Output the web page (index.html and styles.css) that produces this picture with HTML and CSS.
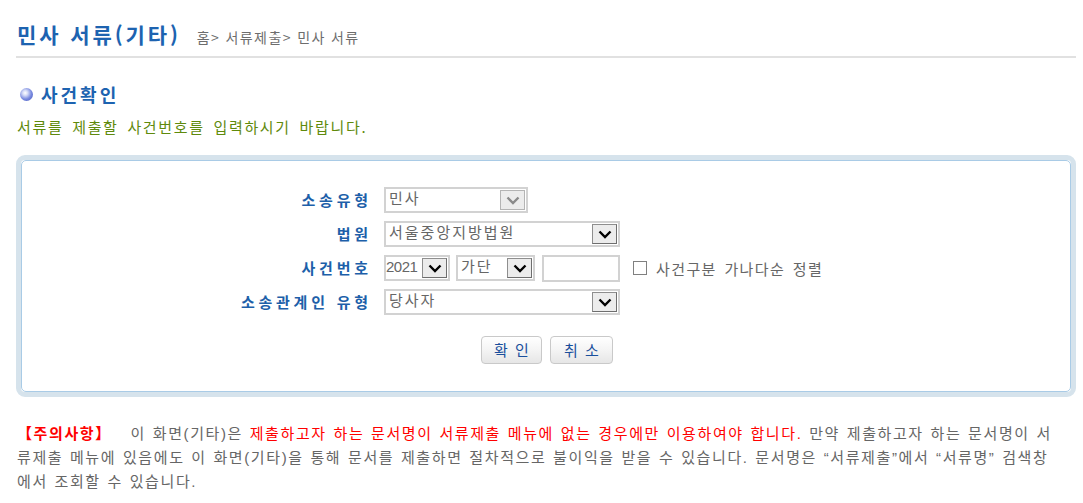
FILE: index.html
```html
<!DOCTYPE html>
<html lang="ko">
<head>
<meta charset="utf-8">
<title>민사 서류(기타)</title>
<link rel="stylesheet" href="styles.css">
</head>
<body>
<div class="page">
  <div class="head">
    <h1 class="title">민사 서류(기타)</h1>
    <div class="crumb">홈&gt; 서류제출&gt; 민사 서류</div>
  </div>

  <h2 class="sec"><span class="bullet"></span>사건확인</h2>
  <p class="guide">서류를 제출할 사건번호를 입력하시기 바랍니다.</p>

  <div class="box">
    <div class="box-in">
      <div class="form">
        <div class="lbl">소송유형</div>
        <div class="fld">
          <div class="sel sel-dis w1">
            <span class="val">민사</span>
            <span class="arr"><svg width="14" height="9" viewBox="0 0 14 9"><path d="M1.5 1.5 L7 7 L12.5 1.5" fill="none" stroke="#8a8a8a" stroke-width="2.4"/></svg></span>
          </div>
        </div>

        <div class="lbl">법원</div>
        <div class="fld">
          <div class="sel w2">
            <span class="val">서울중앙지방법원</span>
            <span class="arr"><svg width="14" height="9" viewBox="0 0 14 9"><path d="M1.5 1.5 L7 7 L12.5 1.5" fill="none" stroke="#000" stroke-width="2.4"/></svg></span>
          </div>
        </div>

        <div class="lbl">사건번호</div>
        <div class="fld row3">
          <div class="sel w3">
            <span class="val num">2021</span>
            <span class="arr"><svg width="14" height="9" viewBox="0 0 14 9"><path d="M1.5 1.5 L7 7 L12.5 1.5" fill="none" stroke="#000" stroke-width="2.4"/></svg></span>
          </div>
          <div class="sel w4">
            <span class="val">가단</span>
            <span class="arr"><svg width="14" height="9" viewBox="0 0 14 9"><path d="M1.5 1.5 L7 7 L12.5 1.5" fill="none" stroke="#000" stroke-width="2.4"/></svg></span>
          </div>
          <div class="txt"></div>
          <label class="chk"><span class="box-c"></span>사건구분 가나다순 정렬</label>
        </div>

        <div class="lbl">소송관계인 유형</div>
        <div class="fld">
          <div class="sel w2">
            <span class="val">당사자</span>
            <span class="arr"><svg width="14" height="9" viewBox="0 0 14 9"><path d="M1.5 1.5 L7 7 L12.5 1.5" fill="none" stroke="#000" stroke-width="2.4"/></svg></span>
          </div>
        </div>
      </div>

      <div class="btns">
        <button class="btn">확 인</button>
        <button class="btn">취 소</button>
      </div>
    </div>
  </div>

  <p class="notice"><b class="red">【주의사항】</b> 이 화면(기타)은 <span class="red">제출하고자 하는 문서명이 서류제출 메뉴에 없는 경우에만 이용하여야 합니다.</span> 만약 제출하고자 하는 문서명이 서류제출 메뉴에 있음에도 이 화면(기타)을 통해 문서를 제출하면 절차적으로 불이익을 받을 수 있습니다. 문서명은 “서류제출”에서 “서류명” 검색창에서 조회할 수 있습니다.</p>
</div>
</body>
</html>
```

FILE: styles.css
```css
* { box-sizing: border-box; }
body {
  margin: 0;
  background: #fff;
  font-family: "Noto Sans CJK KR", "Noto Sans", sans-serif;
  color: #666;
}
.page {
  padding: 0 7px 0 16px;
}
.head {
  height: 58px;
  display: flex;
  align-items: baseline;
  gap: 16px;
  padding-top: 19px;
  padding-left: 1px;
  border-bottom: 2px solid #e1e1e1;
}
.title {
  margin: 0;
  font-size: 21px;
  line-height: 30px;
  font-weight: bold;
  letter-spacing: 2.9px;
  color: #1d63b0;
}
.crumb {
  font-size: 14px;
  color: #6d6d6d;
  letter-spacing: 1.4px;
}
.sec {
  margin: 24px 0 0 4px;
  display: flex;
  align-items: center;
  gap: 8px;
  font-size: 18px;
  line-height: 24px;
  font-weight: bold;
  letter-spacing: 3px;
  color: #1d63b0;
}
.bullet {
  width: 13px;
  height: 13px;
  border-radius: 50%;
  background: radial-gradient(circle at 40% 38%, #ffffff 0, #d6dcf7 22%, #7a8be0 55%, #3d4fb8 100%);
}
.guide {
  margin: 11px 0 0 1px;
  font-size: 15px;
  line-height: 20px;
  color: #5f8a0c;
  letter-spacing: 1.65px;
  word-spacing: 3px;
}
.box {
  margin-top: 18px;
  border: 5px solid #d6e3ec;
  border-radius: 9px;
}
.box-in {
  border: 1px solid #a9cbe6;
  border-radius: 5px;
  padding: 26px 0 27px;
}
.form {
  display: grid;
  grid-template-columns: 346px 1fr;
  column-gap: 16px;
  row-gap: 8px;
  grid-auto-rows: 26px;
}
.lbl {
  text-align: right;
  font-size: 15px;
  line-height: 26px;
  font-weight: bold;
  color: #1d5fa9;
  letter-spacing: 3.75px;
  margin-right: -3.75px;
}
.fld {
  display: flex;
  align-items: center;
}
.row3 .w3 { margin-right: 6px; }
.row3 .w4 { margin-right: 7px; }
.sel {
  height: 26px;
  border: 2px solid #d2d2d2;
  display: flex;
  align-items: stretch;
  justify-content: space-between;
  background: #fff;
}
.w1 { width: 144px; }
.w2 { width: 236px; }
.w3 { width: 66px; }
.w4 { width: 79px; }
.val {
  font-size: 15px;
  line-height: 18px;
  color: #666;
  padding-left: 3px;
  letter-spacing: 2px;
}
.val.num {
  font-family: "Liberation Sans", sans-serif;
  font-size: 15px;
  padding-left: 0;
  letter-spacing: -0.5px;
  line-height: 20px;
}
.arr {
  width: 25px;
  margin: 1px 1px 1px 0;
  border: 1px solid #8e8e8e;
  border-right-color: #6e6e6e;
  border-bottom-color: #6e6e6e;
  background: #ececec;
  display: flex;
  align-items: center;
  justify-content: center;
}
.sel-dis .arr {
  border-color: #b4b4b4;
  background: #ececec;
}
.txt {
  width: 78px;
  height: 27px;
  border: 2px solid #d2d2d2;
  margin-right: 13px;
}
.chk {
  display: flex;
  align-items: center;
  gap: 9px;
  font-size: 15px;
  color: #666;
  letter-spacing: 1.4px;
  word-spacing: 2px;
}
.box-c {
  width: 14px;
  height: 14px;
  border: 1px solid #808080;
  background: #fff;
}
.btns {
  display: flex;
  gap: 8px;
  padding-left: 459px;
  margin-top: 21px;
}
.btn {
  width: 61px;
  height: 28px;
  border: 1px solid #c9c9c9;
  border-radius: 4px;
  background: linear-gradient(#ffffff, #f4f4f4 50%, #e6e6e6);
  font-family: "Noto Sans CJK KR", sans-serif;
  font-size: 15px;
  line-height: 24px;
  color: #1a4f9c;
  padding: 0;
  word-spacing: 3px;
}
.btn + .btn { width: 63px; }
.notice {
  margin: 25px 17px 0 1px;
  font-family: "Liberation Sans", "Noto Sans CJK KR", sans-serif;
  font-size: 15px;
  line-height: 24px;
  color: #666;
  letter-spacing: 1.6px;
  word-spacing: 1px;
}
.red { color: #ff0000; }
b.red { font-weight: bold; margin-right: 12px; }
```
